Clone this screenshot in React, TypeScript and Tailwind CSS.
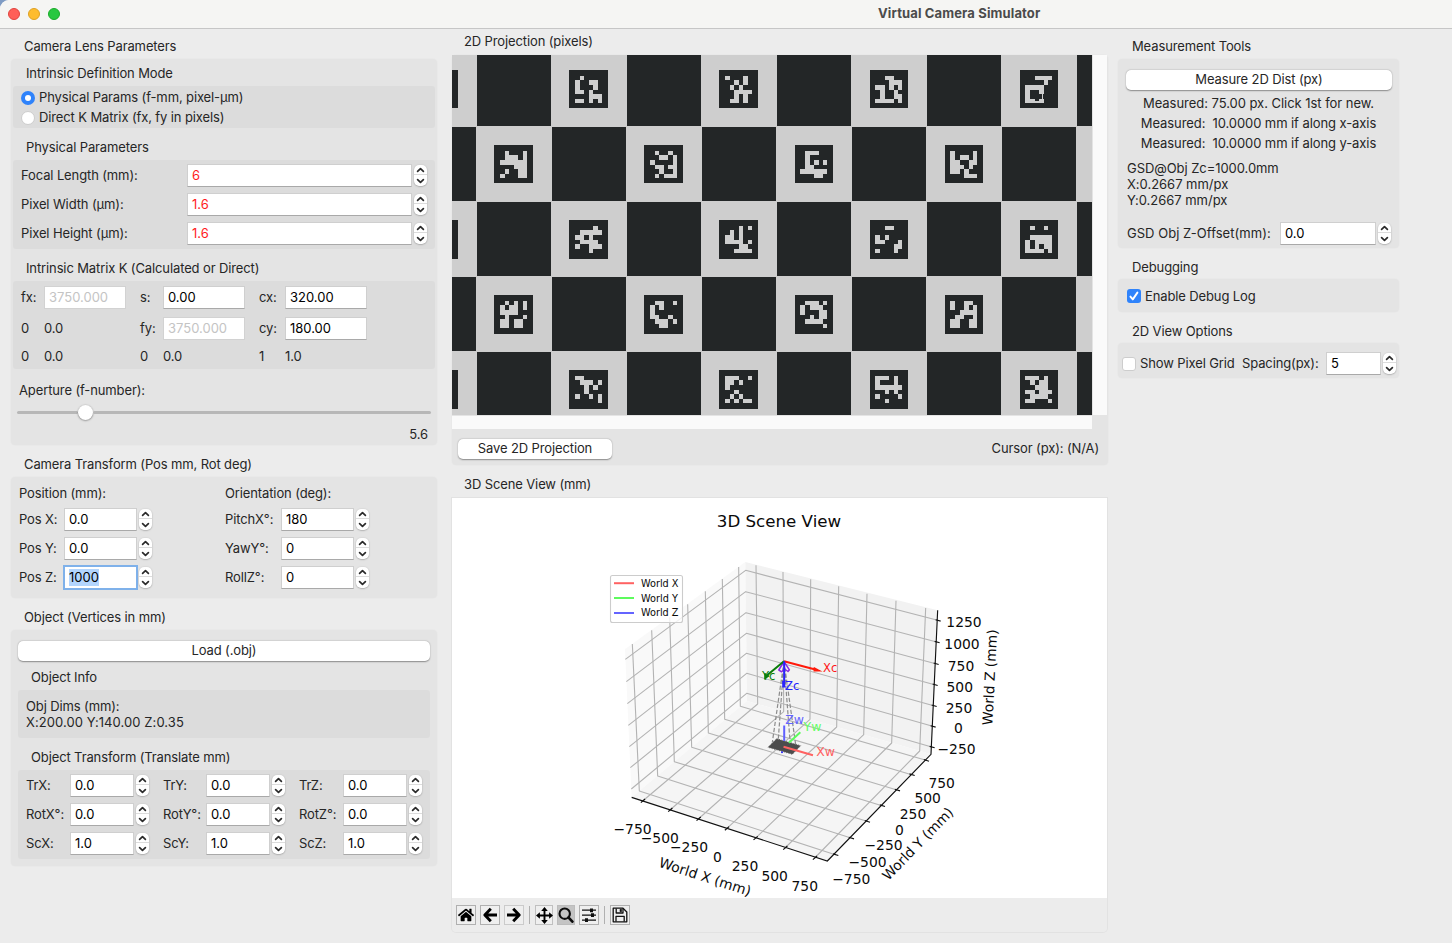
import React from "react";
import { FaHome } from "react-icons/fa";

type Kids = { children?: React.ReactNode; className?: string };

function Chevron({ up }: { up?: boolean }) {
  return (
    <svg width="9" height="6" viewBox="0 0 9 6" fill="none" stroke="#2a2a2a" strokeWidth="1.7" strokeLinecap="round" strokeLinejoin="round">
      <path d={up ? "M1.6 4.4 4.5 1.6 7.4 4.4" : "M1.6 1.6 4.5 4.4 7.4 1.6"} />
    </svg>
  );
}

function Stepper() {
  return (
    <div className="ml-[2px] flex h-[21px] w-[13px] shrink-0 flex-col rounded-[5px] bg-white shadow-[0_0.5px_1.5px_rgba(0,0,0,0.35)]">
      <div className="flex h-[10px] items-center justify-center border-b border-[#dcdcdc]"><Chevron up /></div>
      <div className="flex h-[11px] items-center justify-center"><Chevron /></div>
    </div>
  );
}

function Box({ value, className = "", disabled, red, selected }: { value: string; className?: string; disabled?: boolean; red?: boolean; selected?: boolean }) {
  const tone = red ? "text-[#ff1d1d]" : disabled ? "text-[#c4c4c4]" : "text-black";
  const edge = disabled ? "border-[#d2d2d2]" : "border-[#cfcfcf] border-b-[#a9a9a9]";
  const ring = selected ? "outline outline-2 outline-offset-[-1px] outline-[#7fb1ea]" : "";
  return (
    <div className={`flex h-[23px] shrink-0 items-center border bg-white pl-[4px] tracking-normal ${tone} ${edge} ${ring} ${className}`}>
      {selected ? <span className="bg-[#b3d5fd]">{value}</span> : value}
    </div>
  );
}

function Label({ children, className = "" }: Kids) {
  return <div className={`shrink-0 whitespace-pre ${className}`}>{children}</div>;
}

function Title({ children, className = "" }: Kids) {
  return <div className={`flex shrink-0 items-center ${className}`}>{children}</div>;
}

function Panel({ children, className = "" }: Kids) {
  return <div className={`rounded-[4px] bg-[#e4e4e4] shadow-[0_0_0_1px_rgba(0,0,0,0.012)] ${className}`}>{children}</div>;
}

function Group({ children, className = "" }: Kids) {
  return <div className={`rounded-[3px] bg-[#dcdcdc] ${className}`}>{children}</div>;
}

function PushButton({ children, className = "" }: Kids) {
  return (
    <button className={`flex h-[20px] items-center justify-center rounded-[5px] bg-white pb-px shadow-[0_0.5px_1.5px_rgba(0,0,0,0.4)] ${className}`}>
      {children}
    </button>
  );
}

function Radio({ on, children }: { on?: boolean; children: React.ReactNode }) {
  return (
    <div className="flex h-5 items-center">
      {on ? (
        <span className="mr-[4px] flex size-[14px] items-center justify-center rounded-full bg-[#2f83fb]">
          <span className="size-[6px] rounded-full bg-white" />
        </span>
      ) : (
        <span className="mr-[4px] size-[14px] rounded-full border border-[#cdcdcd] bg-white" />
      )}
      <span className="pb-[2px] leading-[16px]">{children}</span>
    </div>
  );
}

const physical: [string, string][] = [
  ["Focal Length (mm):", "6"],
  ["Pixel Width (µm):", "1.6"],
  ["Pixel Height (µm):", "1.6"],
];

const pose: [string, string, string, string][] = [
  ["Pos X:", "0.0", "PitchX°:", "180"],
  ["Pos Y:", "0.0", "YawY°:", "0"],
  ["Pos Z:", "1000", "RollZ°:", "0"],
];

const objectRows: [string, string, string, string][] = [
  ["TrX:", "TrY:", "TrZ:", "0.0"],
  ["RotX°:", "RotY°:", "RotZ°:", "0.0"],
  ["ScX:", "ScY:", "ScZ:", "1.0"],
];

function LeftColumn() {
  return (
    <div className="flex w-[426px] shrink-0 flex-col">
      <Title className="h-[30px] pl-[13px] pt-[5px]">Camera Lens Parameters</Title>
      <Panel className="h-[386px] px-[2px]">
        <Title className="h-[27px] pl-[13px] pt-[2px]">Intrinsic Definition Mode</Title>
        <Group className="h-[42px] pl-[8px] pt-[2px]">
          <Radio on>Physical Params (f-mm, pixel-µm)</Radio>
          <Radio>Direct K Matrix (fx, fy in pixels)</Radio>
        </Group>
        <Title className="h-[32px] pl-[13px] pt-[7px]">Physical Parameters</Title>
        <Group className="h-[89px] pl-[8px] pt-px">
          {physical.map(([label, value]) => (
            <div key={label} className="flex h-[29px] items-center">
              <Label className="w-[166px]">{label}</Label>
              <Box value={value} red className="w-[225px]" />
              <Stepper />
            </div>
          ))}
        </Group>
        <Title className="h-[32px] pl-[13px] pt-[7px]">Intrinsic Matrix K (Calculated or Direct)</Title>
        <Group className="h-[88px] pl-[8px]">
          <div className="flex h-[33px] items-center">
            <Label className="w-[23px]">fx:</Label><Box value="3750.000" disabled className="mr-[14px] w-[82px]" />
            <Label className="w-[23px]">s:</Label><Box value="0.00" className="mr-[14px] w-[82px]" />
            <Label className="w-[26px]">cx:</Label><Box value="320.00" className="w-[82px]" />
          </div>
          <div className="flex h-[29px] items-center">
            <Label className="w-[23px]">0</Label><Label className="w-[96px]">0.0</Label>
            <Label className="w-[23px]">fy:</Label><Box value="3750.000" disabled className="mr-[14px] w-[82px]" />
            <Label className="w-[26px]">cy:</Label><Box value="180.00" className="w-[82px]" />
          </div>
          <div className="flex h-[27px] items-center">
            <Label className="w-[23px]">0</Label><Label className="w-[96px]">0.0</Label>
            <Label className="w-[23px]">0</Label><Label className="w-[96px]">0.0</Label>
            <Label className="w-[26px]">1</Label><Label>1.0</Label>
          </div>
        </Group>
        <div className="mt-[12px] flex h-[19px] items-center pl-[6px]">Aperture (f-number):</div>
        <div className="flex h-[24px] items-center px-[4px]">
          <div className="h-[3px] w-[61px] rounded-full bg-[#b7b7b7]" />
          <div className="size-[15px] rounded-full bg-white shadow-[0_0.5px_2px_rgba(0,0,0,0.5)]" />
          <div className="h-[3px] grow rounded-full bg-[#b7b7b7]" />
        </div>
        <div className="flex h-[21px] items-center justify-end pr-[7px]">5.6</div>
      </Panel>

      <Title className="h-[32px] pl-[13px] pt-[7px]">Camera Transform (Pos mm, Rot deg)</Title>
      <Panel className="h-[121px] pl-[8px] pt-[6px]">
        <div className="mb-px flex h-[21px] items-center">
          <Label className="w-[206px]">Position (mm):</Label>
          <Label>Orientation (deg):</Label>
        </div>
        {pose.map(([a, av, b, bv]) => (
          <div key={a} className="flex h-[29px] items-center">
            <Label className="w-[45px]">{a}</Label>
            <Box value={av} selected={av === "1000"} className="w-[73px]" />
            <Stepper />
            <Label className="ml-[73px] w-[56px]">{b}</Label>
            <Box value={bv} className="w-[73px]" />
            <Stepper />
          </div>
        ))}
      </Panel>

      <Title className="h-[32px] pl-[13px] pt-[7px]">Object (Vertices in mm)</Title>
      <Panel className="h-[236px] px-[7px] pt-[11px]">
        <PushButton className="w-full">Load (.obj)</PushButton>
        <Title className="h-[29px] pl-[13px] pt-[4px]">Object Info</Title>
        <Group className="h-[48px] pl-[8px] pt-[8px] leading-[16px]">
          <div>Obj Dims (mm):</div>
          <div className="tracking-[0.08px]">X:200.00 Y:140.00 Z:0.35</div>
        </Group>
        <Title className="h-[32px] pl-[13px] pt-[7px]">Object Transform (Translate mm)</Title>
        <Group className="h-[89px] pl-[8px] pt-px">
          {objectRows.map(([a, b, c, v]) => (
            <div key={a} className="flex h-[29px] items-center">
              <Label className="w-[44px]">{a}</Label><Box value={v} className="w-[64px]" /><Stepper />
              <Label className="ml-[14px] w-[43px]">{b}</Label><Box value={v} className="w-[64px]" /><Stepper />
              <Label className="ml-[14px] w-[44px]">{c}</Label><Box value={v} className="w-[64px]" /><Stepper />
            </div>
          ))}
        </Group>
      </Panel>
    </div>
  );
}

/* ---------- 2D projection ---------- */

const DARK = "#232627";
const LIGHT = "#cecece";

const tags: { x: number; y: number; bits: string[] }[] = [
  { x: 117, y: 15, bits: [".#....", "#..##.", "#...#.", "##.#..", "...###", "##.#.#"] },
  { x: 267, y: 15, bits: ["#...#.", "..#.#.", ".#.#..", "..####", "..#.#.", ".##.#."] },
  { x: 418, y: 15, bits: ["..##..", "...###", "##.#.#", ".#..#.", ".#..##", "####.#"] },
  { x: 568, y: 15, bits: ["..####", "....#.", "####..", "#..#..", "#.....", "##.#.."] },
  { x: 42, y: 90, bits: [".#...#", ".###.#", "######", "...###", ".#..##", "#...##"] },
  { x: 192, y: 90, bits: [".#..#.", "..##.#", "#....#", ".##.##", "..#..#", ".#.###"] },
  { x: 343, y: 90, bits: [".###..", ".#....", ".#.#.#", ".##...", "######", "...##."] },
  { x: 493, y: 90, bits: ["#....#", "#.##.#", "##..##", "###.#.", "##.#..", "...###"] },
  { x: 117, y: 165, bits: ["....#.", ".#####", "##.#..", ".####.", "#..###", "...#.."] },
  { x: 267, y: 165, bits: ["...#.#", ".#.#..", "##.#..", "####.#", "...##.", "..####"] },
  { x: 418, y: 165, bits: ["..##..", "......", "#.#...", "##...#", "....##", "#...#."] },
  { x: 568, y: 165, bits: [".#..#.", "......", ".#####", "#.####", "#.#.##", "####.#"] },
  { x: 42, y: 240, bits: [".#.#.#", "#.##.#", "####..", ".#...#", "##.##.", "##.##."] },
  { x: 192, y: 240, bits: [".##..#", "#.#...", "#.....", "##..#.", ".###.#", "..##.."] },
  { x: 343, y: 240, bits: [".###.#", "#.###.", "#...##", "..#.##", ".####.", ".....#"] },
  { x: 493, y: 240, bits: ["#..##.", "#..#.#", "..####", ".##..#", "##..##", "##..##"] },
  { x: 117, y: 315, bits: ["##....", ".###.#", "..#.#.", "..#...", "#..#.#", ".....#"] },
  { x: 267, y: 315, bits: ["###..#", "##.#..", "#.....", "..#...", ".#.#..", "#.#.##"] },
  { x: 418, y: 315, bits: ["###.#.", "#...#.", "######", "..#.#.", "#....#", "..#..."] },
  { x: 568, y: 315, bits: ["###.#.", ".#.##.", "..###.", "##.###", ".####.", "##...#"] },
];

const wide = [6, 11, 15, 20, 24, 29, 33];
const narrow = [5, 10, 15, 19, 24, 28, 32];
const down = [6, 10, 15, 20, 24, 29, 33];

const bands: [number, number, boolean][] = [
  [0, 71, true],
  [72, 74, false],
  [147, 74, true],
  [222, 74, false],
  [297, 63, true],
];

function Projection() {
  return (
    <svg width="640" height="360" viewBox="0 0 640 360" shapeRendering="crispEdges">
      <rect width="640" height="360" fill={LIGHT} />
      {bands.map(([y, h, even]) =>
        [-50, 100, 250, 400, 550].map((x) => (
          <rect key={`${x}-${y}`} x={even ? x + 75 : x} y={y} width="74" height={h} fill={DARK} />
        ))
      )}
      {[15, 165, 315].map((y) => (
        <rect key={y} x="0" y={y} width="6" height={y === 15 ? 38 : 39} fill={DARK} />
      ))}
      {tags.map((t) => {
        const cols = t.x > 300 ? narrow : wide;
        return (
          <g key={`${t.x}-${t.y}`} transform={`translate(${t.x} ${t.y})`}>
            <rect width={t.x > 300 ? 38 : 39} height={t.y < 100 ? 38 : 39} fill={DARK} />
            {t.bits.map((line, r) =>
              line.split("").map((b, c) =>
                b === "#" ? (
                  <rect key={`${r}-${c}`} x={cols[c]} y={down[r]} width={cols[c + 1] - cols[c]} height={down[r + 1] - down[r]} fill={LIGHT} />
                ) : null
              )
            )}
          </g>
        );
      })}
      <path d="M590 39h1v5h-1zM582 46h6v2h-6z" fill={LIGHT} />
    </svg>
  );
}

/* ---------- 3D scene ---------- */

type Pt = [number, number];
const p = (x: number, y: number): Pt => [600 + x / 3, 500 + y / 3];
const join = (pts: Pt[]) => pts.map((q) => q.join(",")).join(" ");

const backTop = p(436, 186);
const backBottom = p(441, 603);
const leftTop = p(75, 448);
const leftBottom = p(95, 892);
const rightTop = p(1013, 331);
const rightBottom = p(993, 763);
const front = p(682, 1083);

const xGrid: Pt[][] = [
  [p(128, 903), p(473, 612), p(468, 196)],
  [p(210, 930), p(551, 635), p(549, 216)],
  [p(295, 957), p(630, 658), p(632, 238)],
  [p(380, 986), p(710, 681), p(716, 259)],
  [p(466, 1015), p(791, 704), p(801, 281)],
  [p(555, 1044), p(875, 729), p(888, 302)],
  [p(644, 1074), p(959, 753), p(977, 324)],
];
const yGrid: Pt[][] = [
  [p(706, 1064), p(118, 873), p(97, 432)],
  [p(753, 1014), p(173, 828), p(155, 391)],
  [p(801, 964), p(223, 785), p(209, 352)],
  [p(846, 917), p(275, 742), p(263, 313)],
  [p(891, 870), p(325, 699), p(316, 274)],
  [p(935, 824), p(374, 658), p(367, 237)],
  [p(978, 781), p(421, 619), p(416, 201)],
];
const zGrid: Pt[][] = [
  [p(76, 478), p(437, 211), p(1013, 361)],
  [p(79, 545), p(437, 275), p(1010, 426)],
  [p(82, 611), p(438, 338), p(1007, 491)],
  [p(85, 676), p(439, 400), p(1004, 554)],
  [p(88, 740), p(439, 460), p(1001, 617)],
  [p(91, 803), p(440, 520), p(998, 679)],
  [p(94, 867), p(440, 580), p(995, 741)],
];

const labels: [string, number, number][] = [
  ["1250", 964, 622.3], ["1000", 962, 644.3], ["750", 961, 666], ["500", 959.8, 687], ["250", 959, 708], ["0", 958.3, 728.3], ["−250", 956.5, 749],
  ["−750", 632.5, 829], ["−500", 659.8, 838.3], ["−250", 689, 847.3], ["0", 717.3, 857.2], ["250", 745, 866.3], ["500", 774.7, 876.2], ["750", 804.8, 886.3],
  ["750", 941.7, 783.2], ["500", 927.7, 798.3], ["250", 913, 814.2], ["0", 899.3, 829.5], ["−250", 883.5, 845.3], ["−500", 867.5, 862.2], ["−750", 851.3, 879.3],
];

function Scene() {
  return (
    <svg width="655" height="400" viewBox="452 498 655 400" fontFamily="DejaVu Sans, sans-serif" className="tracking-normal">
      <rect x="452" y="498" width="655" height="400" fill="#fff" />
      <polygon points={join([backTop, leftTop, leftBottom, backBottom])} fill="#f9f9f9" />
      <polygon points={join([backTop, rightTop, rightBottom, backBottom])} fill="#f2f2f2" />
      <polygon points={join([backBottom, leftBottom, front, rightBottom])} fill="#f5f5f5" />
      <g fill="none" stroke="#b3b3b3" strokeWidth="1.1" strokeLinejoin="round">
        {[...xGrid, ...yGrid, ...zGrid].map((g, i) => <polyline key={i} points={join(g)} />)}
      </g>
      <g fill="none" stroke="#111" strokeWidth="1.15">
        <polyline points={join([leftBottom, front, rightBottom, rightTop])} />
        {xGrid.map(([q], i) => <path key={i} d={`M${q[0] - 1.8} ${q[1] + 1.6}l4.2 -3.6`} />)}
        {yGrid.map(([q], i) => <path key={i} d={`M${q[0] + 3} ${q[1] + 0.9}l-5.2 -1.7`} />)}
        {zGrid.map(([, , q], i) => <path key={i} d={`M${q[0] + 3} ${q[1] + 0.8}l-5 -1.4`} />)}
      </g>
      <g fontSize="13.89" fill="#0a0a0a" textAnchor="middle">
        {labels.map(([s, x, y], i) => <text key={i} x={x} y={y + 5.1}>{s}</text>)}
        <text transform="translate(705 877) rotate(18)" y="4.6">World X (mm)</text>
        <text transform="translate(918 844) rotate(-46)" y="4.6">World Y (mm)</text>
        <text transform="translate(990.2 677.3) rotate(-87)" y="4.6">World Z (mm)</text>
        <text x="779" y="526.6" fontSize="16.67">3D Scene View</text>
      </g>

      <g fill="none" stroke="#8c8c8c" strokeWidth="1.2" strokeDasharray="4.2 1.9">
        <path d="M784 661.5 772.3 742.5M784 661.5 778.3 739M784 661.5 795.7 745M784 661.5 790 741" />
      </g>
      <polygon points={join([p(530, 716), p(602, 737), p(577, 763), p(504, 742)])} fill="#4c4c4c" />
      <polygon points={join([p(530, 716), p(602, 737), p(577, 763), p(504, 742)])} fill="none" stroke="#636363" strokeWidth="1" strokeDasharray="1 1.5" />
      <circle cx="782" cy="752.3" r="1" fill="#2323ff" />
      <g strokeWidth="2" fill="none" strokeLinecap="square">
        <path d="M784.5 747 812 755" stroke="#ff6262" />
        <path d="M789.7 742 799.6 733" stroke="#5dfb5d" />
        <path d="M784.2 740V726.5" stroke="#6060ff" />
      </g>
      <g fill="none" stroke="#8b2be2" strokeWidth="1.5" strokeLinejoin="round">
        <path d="M784 661.5 778.8 670 781.6 671.8 784.6 669 788 671.5 789.4 669.8Z" />
      </g>
      <g strokeWidth="2" fill="none">
        <path d="M784 661.3 818 670.3M813.5 667.8 818.6 670.5 813.5 670.6" stroke="#ff1a0a" />
        <path d="M784 661.3 765 677M765.2 673.2V678L769 675.5" stroke="#0a7d0a" />
        <path d="M784.2 661.3V686M783.2 681V686.6H785.4" stroke="#2b22ff" />
      </g>
      <g fontSize="11.6">
        <text x="823" y="671.6" fill="#ff1a1a">Xc</text>
        <text x="762" y="679.6" fill="#0a800a">Yc</text>
        <text x="785" y="690" fill="#2424ff">Zc</text>
      </g>
      <g fontSize="12.5">
        <text x="816.2" y="755.6" fill="#ff6262">Xw</text>
        <text x="803.5" y="730.6" fill="#66ff66">Yw</text>
        <text x="785.2" y="723.6" fill="#6464ff">Zw</text>
      </g>

      <rect x="610.5" y="575.5" width="72" height="47" rx="2" fill="#fff" fillOpacity="0.8" stroke="#ccc" strokeWidth="1.1" />
      <g strokeWidth="2">
        <path d="M614 583.2h20" stroke="#ff6262" />
        <path d="M614 598h20" stroke="#5dfb5d" />
        <path d="M614 613h20" stroke="#6464ff" />
      </g>
      <g fontSize="9.72" fill="#0a0a0a">
        <text x="641" y="587" textLength="37.5">World X</text>
        <text x="641" y="601.8" textLength="37">World Y</text>
        <text x="641" y="616" textLength="37.5">World Z</text>
      </g>
    </svg>
  );
}

function Tool({ children, className = "" }: Kids) {
  return (
    <div className={`flex h-[20px] shrink-0 items-center justify-center border text-black ${className}`}>
      {children}
    </div>
  );
}

function Toolbar() {
  return (
    <div className="flex h-[34px] items-center pl-[4px]">
      <Tool className="w-[20px] border-[#b0b0b0] bg-[#efefef]"><FaHome size={16} /></Tool>
      <Tool className="ml-[4px] w-[20px] border-[#b0b0b0] bg-[#efefef]">
        <svg width="16" height="16" viewBox="0 0 16 16" fill="none" stroke="#000" strokeWidth="2.9">
          <path d="M15 8H3.5M8.8 1.8 2.8 8 8.8 14.2" strokeLinejoin="round" />
        </svg>
      </Tool>
      <Tool className="ml-[4px] w-[20px] border-[#cbcbcb] bg-[#efefef]">
        <svg width="16" height="16" viewBox="0 0 16 16" fill="none" stroke="#000" strokeWidth="2.9">
          <path d="M1 8H12.5M7.2 1.8 13.2 8 7.2 14.2" strokeLinejoin="round" />
        </svg>
      </Tool>
      <div className="ml-[5px] h-[18px] w-px bg-[#b0b0b0]" />
      <Tool className="ml-[5px] w-[18px] border-[#c0c0c0] bg-[#efefef]">
        <svg width="17" height="17" viewBox="0 0 17 17" className="shrink-0">
          <path d="M8.5 2V15M2 8.5H15" stroke="#000" strokeWidth="1.9" />
          <path d="M8.5 0 11.8 3.9H5.2ZM8.5 17 5.2 13.1H11.8ZM0 8.5 3.9 5.2V11.8ZM17 8.5 13.1 11.8V5.2Z" />
        </svg>
      </Tool>
      <Tool className="ml-[4px] w-[18px] border-[#bcbcbc] bg-[#c4c4c4]">
        <svg width="16" height="16" viewBox="0 0 16 16" fill="none" stroke="#0c0c0c" className="shrink-0">
          <circle cx="6.7" cy="6.7" r="5.2" strokeWidth="2.1" />
          <path d="M10.6 10.6 14.4 14.6" strokeWidth="2.7" strokeLinecap="round" />
        </svg>
      </Tool>
      <Tool className="ml-[4px] w-[20px] border-[#b0b0b0] bg-[#efefef]">
        <svg width="16" height="16" viewBox="0 0 16 16">
          <path d="M1 3.2h14M1 8.2h14M1 13.2h14" stroke="#111" strokeWidth="1.3" />
          <path d="M9 1.4h3v3.8H9zM10 6.3h3v3.8h-3zM4 11.3h3v3.8H4z" fill="#111" />
        </svg>
      </Tool>
      <div className="ml-[5px] h-[18px] w-px bg-[#b0b0b0]" />
      <Tool className="ml-[5px] w-[20px] border-[#b0b0b0] bg-[#efefef]">
        <svg width="16" height="16" viewBox="0 0 16 16" fill="none" stroke="#111" strokeWidth="1.3" strokeLinejoin="round">
          <path d="M1.2 1.2H11L14.8 5V14.8H1.2Z" />
          <path d="M4.2 1.5V6H11V1.5M4 14.5V9.3H12.2V14.5" />
          <path d="M8 2.3h1.6v2.4H8z" fill="#111" strokeWidth="0.6" />
        </svg>
      </Tool>
    </div>
  );
}

function MiddleColumn() {
  return (
    <div className="ml-[15px] flex w-[656px] shrink-0 flex-col">
      <Title className="h-[26px] pb-px pl-[12px]">2D Projection (pixels)</Title>
      <Panel className="h-[410px]">
        <div className="flex">
          <Projection />
          <div className="ml-px h-[360px] w-[14px] bg-[#fafafa]" />
        </div>
        <div className="mt-px h-[13px] w-[640px] bg-[#fafafa]" />
        <div className="flex items-center justify-between pl-[6px] pr-[9px] pt-[10px]">
          <PushButton className="w-[154px]">Save 2D Projection</PushButton>
          <span className="pb-px">Cursor (px): (N/A)</span>
        </div>
      </Panel>
      <Title className="h-[33px] pl-[12px] pt-[6px]">3D Scene View (mm)</Title>
      <div className="h-[434px] w-[655px] rounded-b-[4px] shadow-[0_0_0_1px_rgba(0,0,0,0.04)]">
        <Scene />
        <Toolbar />
      </div>
    </div>
  );
}

function RightColumn() {
  return (
    <div className="ml-[10px] flex w-[281px] shrink-0 flex-col">
      <Title className="h-[30px] pl-[14px] pt-[5px]">Measurement Tools</Title>
      <Panel className="flex h-[189px] flex-col pt-[11px]">
        <PushButton className="ml-[8px] w-[266px] shrink-0">Measure 2D Dist (px)</PushButton>
        <div className="mt-[3px] whitespace-pre text-center leading-[20px]">
          <div className="tracking-[-0.04px]">Measured: 75.00 px. Click 1st for new.</div>
          <div className="tracking-[-0.08px]">{"Measured:  10.0000 mm if along x-axis"}</div>
          <div className="tracking-[-0.08px]">{"Measured:  10.0000 mm if along y-axis"}</div>
        </div>
        <div className="mt-[7px] pl-[9px] leading-[16px] tracking-[-0.02px]">
          <div className="tracking-[-0.06px]">GSD@Obj Zc=1000.0mm</div>
          <div>X:0.2667 mm/px</div>
          <div>Y:0.2667 mm/px</div>
        </div>
        <div className="mt-auto flex h-[29px] items-center pl-[9px]">
          <Label className="w-[153px] tracking-[0.04px]">GSD Obj Z-Offset(mm):</Label>
          <Box value="0.0" className="w-[96px]" />
          <Stepper />
        </div>
      </Panel>
      <Title className="h-[31px] pl-[14px] pt-[8px]">Debugging</Title>
      <Panel className="flex h-[33px] items-center pl-[9px] pt-px leading-[16px]">
        <span className="mr-[4px] flex size-[14px] items-center justify-center rounded-[3px] bg-[#2f83fb]">
          <svg width="12" height="12" viewBox="0 0 12 12" fill="none" stroke="#fff" strokeWidth="1.9" strokeLinecap="round" strokeLinejoin="round">
            <path d="M2.4 6.6 4.8 9.4 9.4 2.6" />
          </svg>
        </span>
        Enable Debug Log
      </Panel>
      <Title className="h-[31px] pl-[14px] pt-[8px]">2D View Options</Title>
      <Panel className="flex h-[35px] items-center pl-[4px] pt-[6px]">
        <span className="mr-[4px] size-[14px] shrink-0 rounded-[3px] border border-[#cdcdcd] bg-white" />
        <Label className="w-[102px]">Show Pixel Grid</Label>
        <Label className="w-[84px]">Spacing(px):</Label>
        <Box value="5" className="w-[55px]" />
        <Stepper />
      </Panel>
    </div>
  );
}

export default function App() {
  return (
    <div className="h-[943px] w-[1452px] overflow-hidden bg-[#7f9cc4] font-['Inter','Liberation_Sans',sans-serif] text-[13px] leading-[17px] tracking-[-0.12px] text-[#262626]">
      <div className="flex h-full flex-col overflow-hidden rounded-tl-[9px] bg-[#ececec]">
        <div className="flex h-[29px] shrink-0 items-center border-b border-[#c6c6c6] bg-[#f5f5f3]">
          <div className="flex w-[878px] items-center gap-[8px] pl-[8px]">
            <span className="size-[12px] rounded-full border border-[#e0443e] bg-[#ff5f57]" />
            <span className="size-[12px] rounded-full border border-[#dea123] bg-[#febc2e]" />
            <span className="size-[12px] rounded-full border border-[#1aab29] bg-[#28c840]" />
          </div>
          <div className="whitespace-nowrap pb-[2px] font-bold leading-[16px] tracking-[0.13px] text-[#4b4b4b]">Virtual Camera Simulator</div>
        </div>
        <div className="flex pl-[11px]">
          <LeftColumn />
          <MiddleColumn />
          <RightColumn />
        </div>
      </div>
    </div>
  );
}
